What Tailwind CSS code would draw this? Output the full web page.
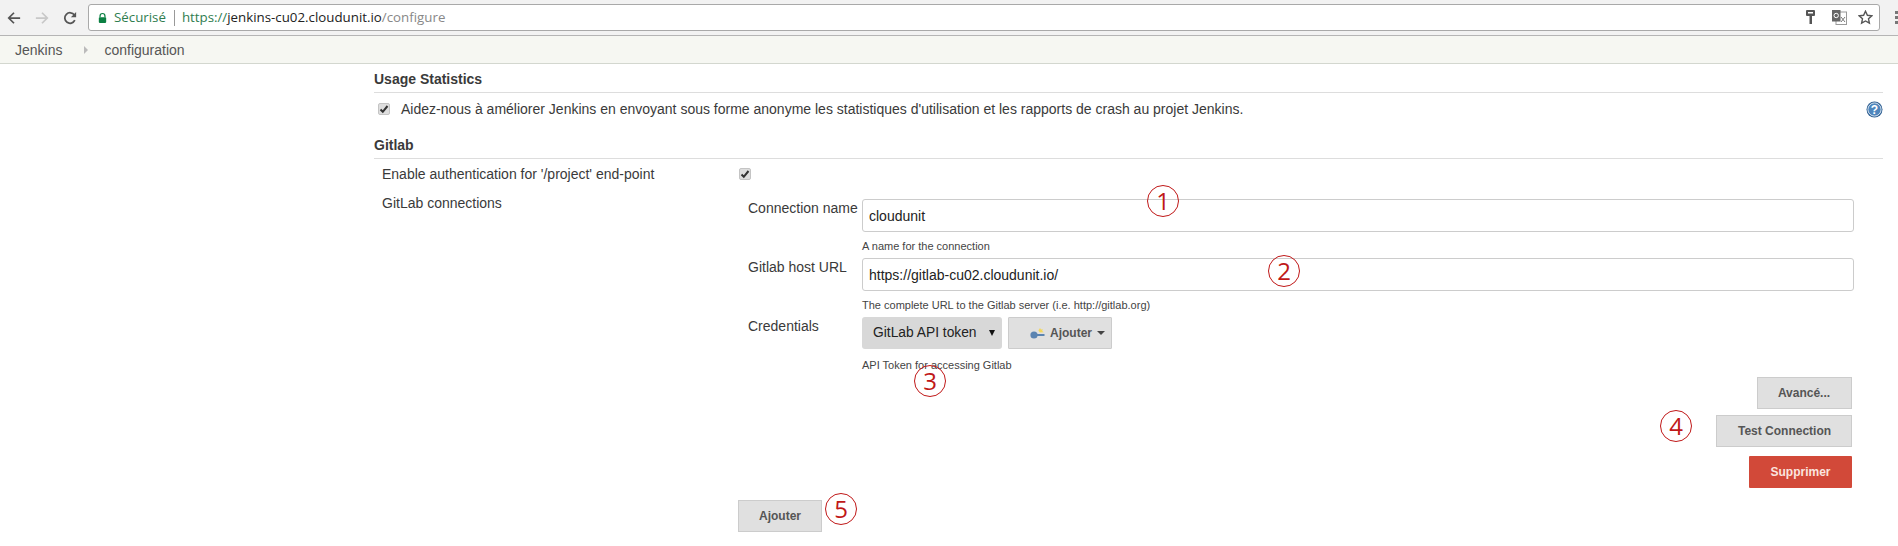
<!DOCTYPE html>
<html lang="fr">
<head>
    <meta charset="UTF-8">
    <title>Jenkins configuration</title>
    <script src="https://cdn.jsdelivr.net/npm/@tailwindcss/browser@4"></script>
</head>
<body class="relative h-[546px] w-[1898px] overflow-hidden bg-white font-['Liberation_Sans',Arial,sans-serif] text-[#3a3a3a]">

    <!-- barre du navigateur -->
    <div class="flex h-[36px] items-center border-b border-[#b5b5b5] bg-[#f2f2f2]">
        <div class="flex w-[88px] shrink-0 items-center pl-[7px]">
            <svg class="h-[14px] w-[14px]" viewBox="0 0 16 16" fill="none" stroke="#555" stroke-width="2"><path d="M15 8H2M8 2L2 8l6 6"/></svg>
            <svg class="ml-[14px] h-[14px] w-[14px]" viewBox="0 0 16 16" fill="none" stroke="#c8c8c8" stroke-width="2"><path d="M1 8h13M8 2l6 6-6 6"/></svg>
            <svg class="ml-[14px] h-[14px] w-[14px]" viewBox="0 0 16 16" fill="none" stroke="#555" stroke-width="2"><path d="M13.5 10.5A6 6 0 1 1 13 4.6"/><path d="M15 1v6H9" fill="#555" stroke="none"/></svg>
        </div>
        <div class="flex h-[27px] w-[1792px] items-center rounded-[3px] border border-[#a9a9a9] bg-white font-['Open_Sans',sans-serif] text-[13.3px]">
            <svg class="ml-[9px] h-[12px] w-[9px]" viewBox="0 0 11 12"><path d="M2.5 5V3.5a3 3 0 0 1 6 0V5" fill="none" stroke="#0b8043" stroke-width="1.5"/><rect x="1" y="5" width="9" height="7" rx="1" fill="#0b8043"/></svg>
            <span class="ml-[7px] text-[#2f7d4f]">Sécurisé</span>
            <span class="ml-[8px] h-[16px] w-px bg-[#999]"></span>
            <span class="ml-[7px] text-[#2f7d4f]">https://</span><span class="text-[#222]">jenkins-cu02.cloudunit.io</span><span class="text-[#888]">/configure</span>
            <div class="ml-auto flex items-center pr-[6px]">
                <svg class="h-[15px] w-[10px]" viewBox="0 0 10 15"><rect x="0" y="0" width="9" height="6" rx="1" fill="#555"/><rect x="2" y="2" width="5" height="1.5" fill="#fff"/><rect x="3.5" y="6" width="2.5" height="8" fill="#555"/></svg>
                <svg class="ml-[16px] h-[15px] w-[15px]" viewBox="0 0 15 15"><rect x="4" y="2" width="10.5" height="12.5" fill="#fff" stroke="#999"/><rect x="0" y="0" width="8.5" height="11.5" fill="#666"/><circle cx="4.2" cy="5.5" r="2.2" fill="none" stroke="#fff"/><path d="M9 7l4 5M13 7l-4 5" stroke="#777"/></svg>
                <svg class="ml-[11px] h-[15px] w-[15px]" viewBox="0 0 15 15" fill="none" stroke="#555" stroke-width="1.4"><path d="M7.5 1.2l1.9 4.1 4.4.5-3.3 3 .9 4.4-3.9-2.2-3.9 2.2.9-4.4-3.3-3 4.4-.5z"/></svg>
            </div>
        </div>
        <div class="ml-[15px] flex flex-col gap-[2px]">
            <span class="h-[3px] w-[3px] bg-[#777]"></span>
            <span class="h-[3px] w-[3px] bg-[#777]"></span>
            <span class="h-[3px] w-[3px] bg-[#777]"></span>
        </div>
    </div>

    <!-- fil d'ariane -->
    <div class="flex h-[28px] items-center border-b border-[#d3d7cf] bg-[#f6f7f2] pl-[15px] pt-[1px] text-[14px] text-[#555]">
        <span>Jenkins</span>
        <span class="ml-[22px] h-0 w-0 border-y-[4px] border-l-[4px] border-y-transparent border-l-[#bbb]"></span>
        <span class="ml-[16px]">configuration</span>
    </div>

    <!-- formulaire -->
    <main class="ml-[374px] w-[1509px] text-[14px]">
        <h2 class="mt-[6px] h-[22px] text-[14px] font-bold leading-[18px]">Usage Statistics</h2>
        <div class="border-t border-[#ddd]"></div>
        <div class="flex h-[32px] items-center pl-[4px]">
            <span class="flex h-[12px] w-[12px] items-center justify-center rounded-[2px] border border-[#c4c4c4] bg-[#dedede]">
                <svg class="h-[10px] w-[10px]" viewBox="0 0 10 10" fill="none" stroke="#333" stroke-width="2"><path d="M1.5 5.5l2.3 2.3L8.5 2"/></svg>
            </span>
            <span class="ml-[11px] mt-[1px]">Aidez-nous à améliorer Jenkins en envoyant sous forme anonyme les statistiques d'utilisation et les rapports de crash au projet Jenkins.</span>
            <svg class="ml-auto h-[17px] w-[17px]" viewBox="0 0 17 17"><circle cx="8.5" cy="8.5" r="8" fill="#2f5f92"/><circle cx="8.5" cy="8.5" r="6.6" fill="#4f86bd" stroke="#d5e3f0" stroke-width="1"/><text x="8.5" y="13" text-anchor="middle" font-size="12" font-weight="bold" fill="#fff" font-family="Liberation Sans">?</text></svg>
        </div>

        <h2 class="mt-[11px] h-[22px] text-[14px] font-bold leading-[18px]">Gitlab</h2>
        <div class="border-t border-[#ddd]"></div>

        <div class="mt-[5px] flex h-[20px] items-center pl-[8px]">
            <span class="w-[357px]">Enable authentication for '/project' end-point</span>
            <span class="flex h-[12px] w-[12px] items-center justify-center rounded-[2px] border border-[#c4c4c4] bg-[#dedede]">
                <svg class="h-[10px] w-[10px]" viewBox="0 0 10 10" fill="none" stroke="#333" stroke-width="2"><path d="M1.5 5.5l2.3 2.3L8.5 2"/></svg>
            </span>
        </div>

        <div class="mt-[9px] flex pl-[8px]">
            <span class="w-[356px] shrink-0 leading-[20px]">GitLab connections</span>
            <div class="flex-1 pt-[6px]">
                <div class="flex">
                    <label class="mt-[-1px] w-[124px] shrink-0 pl-[10px] leading-[20px]">Connection name</label>
                    <input class="h-[33px] w-[992px] rounded-[3px] border border-[#ccc] bg-white px-[6px] text-[14px] text-[#222]" value="cloudunit">
                </div>
                <p class="ml-[124px] mt-[7px] h-[19px] text-[11px] leading-[14px] text-[#444]">A name for the connection</p>
                <div class="flex">
                    <label class="mt-[-1px] w-[124px] shrink-0 pl-[10px] leading-[20px]">Gitlab host URL</label>
                    <input class="h-[33px] w-[992px] rounded-[3px] border border-[#ccc] bg-white px-[6px] text-[14px] text-[#222]" value="https://gitlab-cu02.cloudunit.io/">
                </div>
                <p class="ml-[124px] mt-[7px] h-[19px] text-[11px] leading-[14px] text-[#444]">The complete URL to the Gitlab server (i.e. http://gitlab.org)</p>
                <div class="flex">
                    <label class="mt-[-1px] w-[124px] shrink-0 pl-[10px] leading-[20px]">Credentials</label>
                    <span class="flex h-[32px] w-[140px] items-center rounded-[3px] bg-[#d8d8d8] pl-[11px] text-[13.8px] text-[#222]">GitLab API token<span class="ml-[12px] h-0 w-0 border-x-[3.5px] border-t-[6px] border-x-transparent border-t-[#111]"></span></span>
                    <span class="ml-[6px] flex h-[32px] w-[104px] items-center rounded-[1px] border border-[#ccc] bg-[#e0e0e0] pl-[21px] text-[12px] font-bold text-[#555]">
                        <svg class="h-[11px] w-[15px]" viewBox="0 0 15 11"><circle cx="4" cy="7" r="3.6" fill="#5b84b1"/><rect x="6" y="6" width="8.5" height="2" fill="#5b84b1"/><path d="M10 0l1 1.6 1.8-.4-.6 1.7 1.6 1.3-4 .2-1.4-2z" fill="#f3d75c"/></svg>
                        <span class="ml-[5px]">Ajouter</span>
                        <span class="ml-[5px] h-0 w-0 border-x-[4px] border-t-[4px] border-x-transparent border-t-[#444]"></span>
                    </span>
                </div>
                <p class="ml-[124px] mt-[9px] h-[19px] text-[11px] leading-[14px] text-[#444]">API Token for accessing Gitlab</p>
                <div class="mr-[31px] flex flex-col items-end gap-[6px] text-[12px] font-bold">
                    <button class="h-[32px] w-[95px] border border-[#ccc] bg-[#e0e0e0] pr-[1px] text-[#555]">Avancé...</button>
                    <button class="h-[32px] w-[136px] border border-[#ccc] bg-[#e0e0e0] pl-[1px] text-[#555]">Test Connection</button>
                    <button class="mt-[3px] h-[32px] w-[103px] rounded-[1px] bg-[#d24939] text-[#fbe4df]">Supprimer</button>
                </div>
                <button class="mt-[12px] h-[32px] w-[84px] border border-[#ccc] bg-[#e0e0e0] text-[12px] font-bold text-[#555]">Ajouter</button>
            </div>
        </div>
    </main>

    <!-- annotations -->
    <span class="absolute left-[1147px] top-[185px] flex h-[32px] w-[32px] items-center justify-center rounded-full border border-[#c01818] font-['Open_Sans',sans-serif] text-[24px] text-[#c01818]">1</span>
    <span class="absolute left-[1268px] top-[255px] flex h-[32px] w-[32px] items-center justify-center rounded-full border border-[#c01818] font-['Open_Sans',sans-serif] text-[24px] text-[#c01818]">2</span>
    <span class="absolute left-[914px] top-[365px] flex h-[32px] w-[32px] items-center justify-center rounded-full border border-[#c01818] font-['Open_Sans',sans-serif] text-[24px] text-[#c01818]">3</span>
    <span class="absolute left-[1660px] top-[410px] flex h-[32px] w-[32px] items-center justify-center rounded-full border border-[#c01818] font-['Open_Sans',sans-serif] text-[24px] text-[#c01818]">4</span>
    <span class="absolute left-[825px] top-[493px] flex h-[32px] w-[32px] items-center justify-center rounded-full border border-[#c01818] font-['Open_Sans',sans-serif] text-[24px] text-[#c01818]">5</span>
</body>
</html>
